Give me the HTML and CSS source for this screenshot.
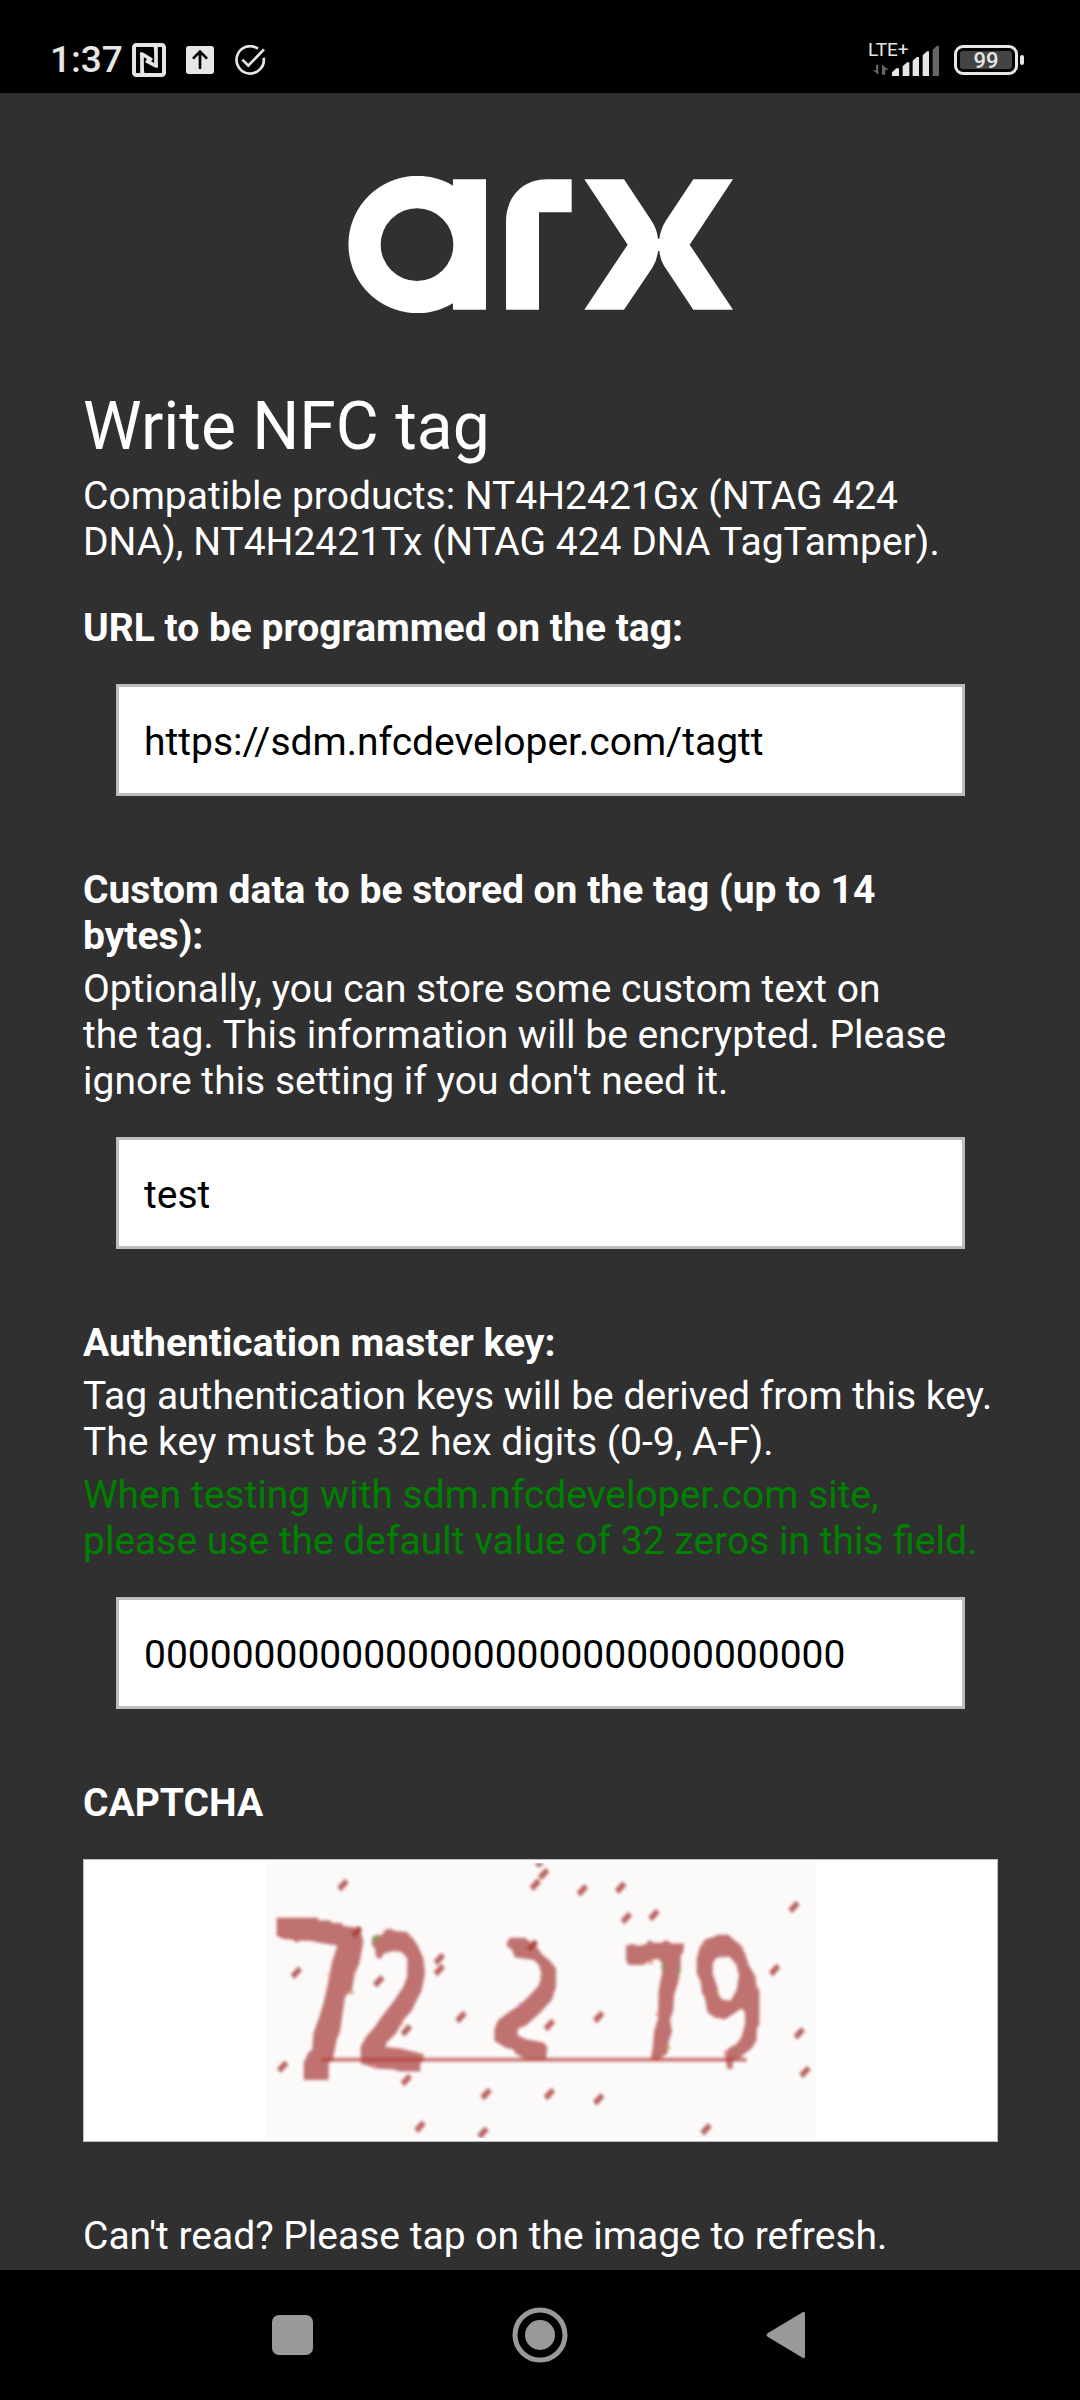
FILE: index.html
```html
<!DOCTYPE html>
<html lang="en">
<head>
<meta charset="utf-8">
<meta name="viewport" content="width=device-width">
<title>Write NFC tag</title>
<link rel="stylesheet" href="styles.css">
</head>
<body>
<header class="status">
  <div class="status-left">
    <span class="clock">1:37</span>
    <svg class="ico-nfc" width="34" height="34" viewBox="0 0 102 102" fill="none" stroke="#e6e6e6" role="img" aria-label="NFC">
      <rect x="6" y="6" width="90" height="90" rx="7" stroke-width="12"/>
      <path d="M30 91V33L60 51M72 11V69L42 53" stroke-width="11" stroke-linejoin="round"/>
      <path d="M26 28L35 92M67 10L76 74" stroke-width="5"/>
    </svg>
    <svg class="ico-up" width="28" height="28" viewBox="0 0 84 84" role="img" aria-label="Upload">
      <rect width="84" height="84" rx="8" fill="#e6e6e6"/>
      <path d="M42 69V19M21 38L42 17L63 38" fill="none" stroke="#000" stroke-width="8"/>
    </svg>
    <svg class="ico-check" width="31" height="31" viewBox="0 0 93 93" fill="none" stroke="#e6e6e6" stroke-width="8" role="img" aria-label="Done">
      <path d="M69 11A41 41 0 1 0 86 38"/>
      <path d="M22 44L40 62L87 13"/>
    </svg>
  </div>
  <div class="status-right">
    <div class="signal">
      <svg width="72" height="34" viewBox="0 0 216 102" role="img" aria-label="Signal strength">
        <path d="M22 65V95L6 82H15V65ZM33 95V65L53 80H43V95Z" fill="#666"/>
        <g fill="#e6e6e6">
          <path d="M63 88L76 76H84V99H63Z"/>
          <path d="M95 70L108 58H115V99H95Z"/>
          <path d="M125 53L138 42H144V99H125Z"/>
          <path d="M155 37L168 25H174V99H155Z"/>
        </g>
        <path d="M185 20L198 8H204V99H185Z" fill="#666"/>
      </svg>
      <span class="network">LTE+</span>
    </div>
    <div class="battery"><span class="level">99</span></div>
  </div>
</header>

<main class="screen">
  <svg class="logo" viewBox="54 48 1155 412" fill="#fff" role="img" aria-label="arx">
    <path fill-rule="evenodd" d="M369 77V58H468V449H369V430A207 206 0 1 1 369 77ZM261 145A109 109 0 1 0 261 363A109 109 0 1 0 261 145Z"/>
    <path d="M528 449V184C528 112 578 58 650 58H725V157H627V449Z"/>
    <path d="M763 58H882L965 183Q981 207 984 236H988Q992 207 1007 183L1090 58H1209L1079 254L1209 449H1090L1006 323Q991 302 988 273H984Q981 302 967 323L882 449H763L893 254Z"/>
  </svg>

  <h1 class="title">Write NFC tag</h1>
  <p class="text">Compatible products: NT4H2421Gx (NTAG 424 DNA), NT4H2421Tx (NTAG 424 DNA TagTamper).</p>

  <form class="form">
    <div class="group first">
      <label class="label" for="url">URL to be programmed on the tag:</label>
      <input class="field" id="url" type="text" value="https://sdm.nfcdeveloper.com/tagtt">
    </div>
    <div class="group">
      <label class="label" for="data">Custom data to be stored on the tag (up to 14 bytes):</label>
      <p class="text">Optionally, you can store some custom text on<br>the tag. This information will be encrypted. Please ignore this setting if you don't need it.</p>
      <input class="field" id="data" type="text" value="test">
    </div>
    <div class="group">
      <label class="label" for="key">Authentication master key:</label>
      <p class="text">Tag authentication keys will be derived from this key. The key must be 32 hex digits (0-9, A-F).</p>
      <p class="text hint">When testing with sdm.nfcdeveloper.com site, please use the default value of 32 zeros in this field.</p>
      <input class="field" id="key" type="text" value="00000000000000000000000000000000">
    </div>
    <div class="group">
      <h2 class="label">CAPTCHA</h2>
      <button class="captcha" type="button" aria-label="Refresh CAPTCHA">
        <svg class="captcha-image" viewBox="18 39 1650 825" aria-hidden="true">
          <defs>
            <path id="dot" d="M-17 5L6 -19L17 -6L-6 19Z"/>
          </defs>
          <rect x="18" y="39" width="1650" height="825" fill="#fcfaf9"/>
          <g class="soft">
            <g fill="#bf7270">
              <path d="M50 203H172L178 211H210L216 219H244L250 228L300 234L310 275L298 340L284 372L276 420L255 440L240 545L230 570L218 630L206 640V690H131V638L145 608L157 598L160 550L178 500L190 460L204 400L215 340L232 286L190 280L150 272H120L108 278L100 270L70 267L50 258Z"/>
              <path d="M336 262L352 254L365 256L375 240L390 236L405 243L440 246L458 264L475 290L490 325L495 370L484 425L470 450L455 482L430 510L408 550L380 578L376 591L420 595L490 612L492 630L481 640V664H420L400 658L350 655L302 640V590L318 560L345 530L365 500L400 455L430 410L441 380L442 325L425 306L400 303L372 310L360 328L347 318L346 298L336 285Z"/>
              <path d="M740 278L750 263L795 264L830 290L845 312L872 335L888 355V410L875 450L840 488L800 525L773 537V556L800 568L850 577L862 590L858 628H800L765 610L762 600L735 592L703 572V538L713 512L745 487L775 468L805 440L835 408L845 380L838 348L822 330L765 322L755 298L742 290Z"/>
              <path d="M1098 286L1118 282L1134 288L1157 283L1167 270L1180 278L1206 278L1218 270L1234 280H1272L1270 308L1262 315V350L1255 395L1242 435L1240 480L1230 510L1236 545L1226 575L1222 610L1205 622L1192 632L1172 626L1178 595L1182 545L1194 505L1196 420L1206 370V340L1195 326L1170 332L1150 345H1105L1098 330Z"/>
              <path fill-rule="evenodd" d="M1310 325L1320 290L1335 268L1360 261L1375 254H1405L1420 268L1440 283L1455 310L1466 345L1485 378L1490 410L1498 420V520L1490 540V570L1475 595L1450 614L1440 624L1418 632V657H1402L1395 615L1405 595L1430 582L1445 560L1455 520V488L1445 475L1420 492L1395 508L1365 502L1343 488L1335 445L1325 425L1322 395L1310 370ZM1370 322L1358 340V372L1372 410L1374 430L1386 449L1412 452L1430 420L1437 375L1428 342L1408 320Z"/>
            </g>
            <g fill="#b96562">
              <use href="#dot" x="249" y="105"/><use href="#dot" x="109" y="368"/><use href="#dot" x="356" y="394"/><use href="#dot" x="538" y="327"/><use href="#dot" x="538" y="360"/><use href="#dot" x="603" y="501"/><use href="#dot" x="439" y="541"/><use href="#dot" x="68" y="650"/><use href="#dot" x="439" y="690"/><use href="#dot" x="678" y="732"/><use href="#dot" x="480" y="830"/><use href="#dot" x="669" y="848"/><use href="#dot" x="851" y="72"/><use href="#dot" x="826" y="104"/><use href="#dot" x="967" y="121"/><use href="#dot" x="1082" y="113"/><use href="#dot" x="1099" y="204"/><use href="#dot" x="1182" y="195"/><use href="#dot" x="1602" y="171"/><use href="#dot" x="1544" y="360"/><use href="#dot" x="868" y="525"/><use href="#dot" x="1016" y="501"/><use href="#dot" x="1618" y="550"/><use href="#dot" x="1635" y="666"/><use href="#dot" x="868" y="732"/><use href="#dot" x="1016" y="748"/><use href="#dot" x="1338" y="838"/>
              <path d="M826 39H852L840 52L828 48Z"/>
            </g>
            <g fill="#ad4542">
              <use href="#dot" x="290" y="246"/><use href="#dot" x="817" y="287"/>
            </g>
            <path d="M184 629H1460" stroke="#b5413e" stroke-opacity="0.7" stroke-width="12"/>
            <g fill="#78a84e">
              <circle cx="347" cy="265" r="8"/><circle cx="1209" cy="349" r="6"/><circle cx="1257" cy="363" r="6"/>
            </g>
            <g fill="#b9a25c">
              <circle cx="276" cy="428" r="5"/><circle cx="1224" cy="592" r="6"/><circle cx="482" cy="617" r="5"/><circle cx="1484" cy="382" r="5"/><circle cx="1372" cy="425" r="5"/><circle cx="843" cy="380" r="4"/>
            </g>
            <g fill="#fa8486">
              <circle cx="450" cy="261" r="5"/><circle cx="282" cy="370" r="5"/><circle cx="425" cy="520" r="5"/><circle cx="343" cy="650" r="6"/><circle cx="1172" cy="337" r="6"/><circle cx="1192" cy="492" r="5"/><circle cx="1397" cy="607" r="6"/><circle cx="1445" cy="293" r="5"/>
            </g>
            <circle cx="208" cy="375" r="5" fill="#e8975c"/>
            <circle cx="1330" cy="285" r="5" fill="#e8975c"/>
            <circle cx="780" cy="465" r="6" fill="#e077c8"/>
          </g>
        </svg>
      </button>
    </div>
    <p class="text note">Can't read? Please tap on the image to refresh.</p>
  </form>
</main>

<nav class="navbar">
  <button class="nav-button" type="button" aria-label="Recent apps">
    <svg width="60" height="60" viewBox="0 0 60 60" fill="#999"><rect x="9" y="10" width="41" height="40" rx="7"/></svg>
  </button>
  <button class="nav-button" type="button" aria-label="Home">
    <svg width="60" height="60" viewBox="0 0 60 60" fill="#999"><circle cx="30" cy="30" r="25" fill="none" stroke="#999" stroke-width="5"/><circle cx="30" cy="30" r="15"/></svg>
  </button>
  <button class="nav-button" type="button" aria-label="Back">
    <svg width="60" height="60" viewBox="0 0 60 60" fill="#999"><path d="M11 28L46 7Q48 6 48 9V51Q48 54 46 53L11 32Q8 30 11 28Z"/></svg>
  </button>
</nav>
</body>
</html>
```
FILE: styles.css
```css
* {
  box-sizing: border-box;
}

body {
  margin: 0;
  min-height: 100vh;
  display: flex;
  flex-direction: column;
  background: #303030;
  color: #fff;
  font: 39px/46px Roboto, sans-serif;
}

h1,
h2,
p {
  margin: 0;
}

/* Status bar */
.status {
  display: flex;
  justify-content: space-between;
  height: 93px;
  padding: 27px 56px 0 50px;
  background: #000;
  color: #e6e6e6;
}

.status-left,
.status-right {
  display: flex;
  align-items: center;
  height: 66px;
}

.clock {
  width: 82px;
  font-size: 37px;
  font-weight: 500;
  line-height: 42px;
}

.status svg {
  display: block;
}

.ico-up {
  margin-left: 20px;
}

.ico-check {
  margin-left: 21px;
}

.signal {
  position: relative;
  margin-right: 11px;
}

.network {
  position: absolute;
  left: -3px;
  top: -4px;
  font-size: 19px;
  line-height: 22px;
}

.battery {
  position: relative;
  width: 64px;
  height: 30px;
  padding: 3px;
  border: 3px solid #e6e6e6;
  border-radius: 9px;
  margin-right: 6px;
}

.battery::after {
  content: "";
  position: absolute;
  right: -9px;
  top: 7px;
  width: 4px;
  height: 10px;
  border-radius: 2px;
  background: #e6e6e6;
}

.level {
  display: block;
  height: 18px;
  border-radius: 3px;
  background: #444;
  font-size: 22px;
  font-weight: 500;
  line-height: 20px;
  text-align: center;
}

/* Page content */
.screen {
  flex: 1;
  display: flex;
  flex-direction: column;
  padding: 83px 82px 10px 83px;
}

.logo {
  align-self: center;
  width: 385px;
  margin-bottom: 75px;
}

.title {
  margin-bottom: 8px;
  font-size: 66px;
  font-weight: 400;
  line-height: 77px;
}

.form {
  display: flex;
  flex-direction: column;
  gap: 71px;
}

.group {
  display: flex;
  flex-direction: column;
  gap: 7px;
}

.group.first {
  margin-top: 40px;
}

.label {
  font-size: 39px;
  font-weight: 700;
  line-height: 46px;
}

.hint {
  color: #008000;
}

.field {
  margin: 26px 33px 0;
  padding: 32px 25px 28px;
  border: 3px solid #bdbdbd;
  border-radius: 0;
  background: #fff;
  color: #000;
  font: inherit;
  height: 112px;
  min-width: 0;
}

.captcha {
  display: flex;
  justify-content: center;
  margin-top: 26px;
  padding: 3px;
  border: 1px solid #bdbdbd;
  background: #fff;
}

.captcha-image {
  display: block;
  width: 100%;
  max-width: 550px;
}

.soft {
  filter: blur(4px);
}

/* Navigation bar */
.navbar {
  display: flex;
  justify-content: center;
  align-items: center;
  gap: 187px;
  height: 130px;
  background: #000;
}

.nav-button {
  padding: 0;
  border: 0;
  background: none;
}

.nav-button svg {
  display: block;
}
```
